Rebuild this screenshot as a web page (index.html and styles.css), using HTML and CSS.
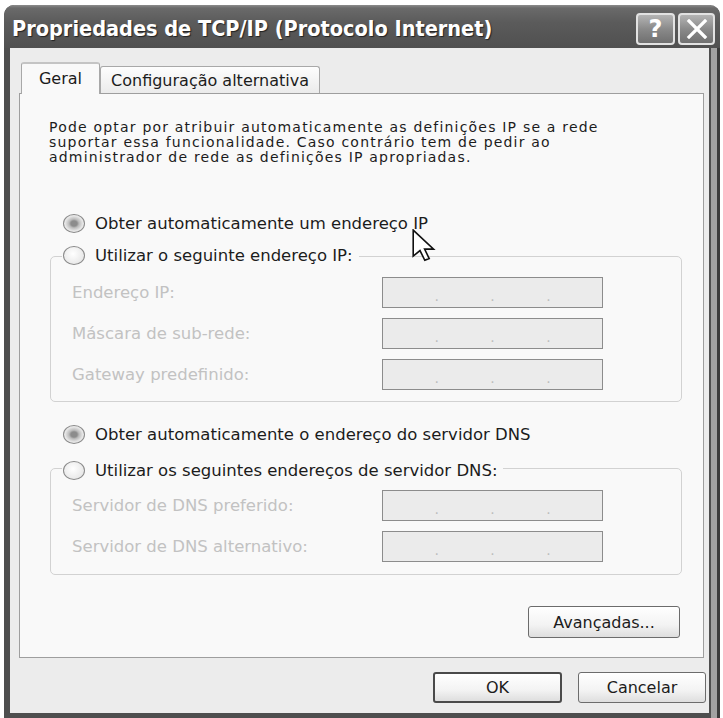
FILE: index.html
```html
<!DOCTYPE html>
<html lang="pt">
<head>
<meta charset="utf-8">
<title>Propriedades de TCP/IP</title>
<link rel="stylesheet" href="styles.css">
</head>
<body>
<div class="window">
  <div class="titlebar">
    <span class="title">Propriedades de TCP/IP (Protocolo Internet)</span>
    <div class="tbtns">
      <span class="tbtn help">?</span>
      <span class="tbtn close"><svg width="22" height="20" viewBox="0 0 22 20"><path d="M3 2 L19 18 M19 2 L3 18" stroke="#fff" stroke-width="3.2" stroke-linecap="square"/></svg></span>
    </div>
  </div>
  <div class="body">
    <div class="tabs">
      <div class="tab active">Geral</div>
      <div class="tab alt">Configuração alternativa</div>
    </div>
    <div class="panel">
      <p class="intro">Pode optar por atribuir automaticamente as definições IP se a rede<br>suportar essa funcionalidade. Caso contrário tem de pedir ao<br>administrador de rede as definições IP apropriadas.</p>

      <div class="radio-row r1"><span class="radio on"></span><span>Obter automaticamente um endereço IP</span></div>
      <div class="group g1">
        <div class="radio-row legend l1"><span class="radio"></span><span>Utilizar o seguinte endereço IP:</span></div>
        <div class="fields f1">
          <div class="field"><span>Endereço IP:</span><div class="ip"><i></i><b>.</b><i></i><b>.</b><i></i><b>.</b><i></i></div></div>
          <div class="field"><span>Máscara de sub-rede:</span><div class="ip"><i></i><b>.</b><i></i><b>.</b><i></i><b>.</b><i></i></div></div>
          <div class="field"><span>Gateway predefinido:</span><div class="ip"><i></i><b>.</b><i></i><b>.</b><i></i><b>.</b><i></i></div></div>
        </div>
      </div>

      <div class="radio-row r3"><span class="radio on"></span><span>Obter automaticamente o endereço do servidor DNS</span></div>
      <div class="group g2">
        <div class="radio-row legend l2"><span class="radio"></span><span>Utilizar os seguintes endereços de servidor DNS:</span></div>
        <div class="fields f2">
          <div class="field"><span>Servidor de DNS preferido:</span><div class="ip"><i></i><b>.</b><i></i><b>.</b><i></i><b>.</b><i></i></div></div>
          <div class="field"><span>Servidor de DNS alternativo:</span><div class="ip"><i></i><b>.</b><i></i><b>.</b><i></i><b>.</b><i></i></div></div>
        </div>
      </div>

      <div class="adv-row"><span class="btn adv">Avançadas...</span></div>
    </div>
    <div class="actions">
      <span class="btn ok">OK</span>
      <span class="btn cancel">Cancelar</span>
    </div>
  </div>
</div>
<svg class="cursor" width="24" height="33" viewBox="0 0 12 19" preserveAspectRatio="none"><path d="M0.6 0.6 L0.6 15.6 L4 12.4 L6.4 18 L8.6 17 L6.3 11.6 L10.8 11.6 Z" fill="#fff" stroke="#111" stroke-width="1.6" vector-effect="non-scaling-stroke" stroke-linejoin="miter"/></svg>
</body>
</html>
```
FILE: styles.css
```css
* { box-sizing: border-box; }
html, body { margin: 0; padding: 0; }
body {
  width: 723px;
  height: 718px;
  overflow: hidden;
  background: #fff;
  font-family: "DejaVu Sans", sans-serif;
  color: #1c1c1c;
  position: relative;
}
.window {
  margin: 5px 0 0 4px;
  width: 716px;
  height: 713px;
  border-radius: 10px 10px 0 0;
  overflow: hidden;
  background: linear-gradient(to left, #3c3c3c 0 3px, #a2a2a2 3px 9px, #4e4e4e 9px);
  display: flex;
  flex-direction: column;
}
.titlebar {
  height: 43px;
  flex: none;
  display: flex;
  align-items: center;
  padding: 4px 5px 0 8px;
  background: linear-gradient(#8c8c8c 0, #6a6a6a 3px, #5b5b5b 40%, #505050 100%);
}
.title {
  flex: 1;
  color: #fff;
  font-family: "DejaVu Sans Condensed", "DejaVu Sans", sans-serif;
  font-stretch: condensed;
  font-weight: bold;
  font-size: 21.5px;
  white-space: nowrap;
  text-shadow: 1px 1px 1px #222;
}
.tbtns { display: flex; gap: 3px; }
.tbtn {
  width: 39px;
  height: 32px;
  border: 2px solid #e2e2e2;
  border-radius: 4px;
  background: linear-gradient(#b4b4b4, #8a8a8a 50%, #707070);
  display: flex;
  align-items: center;
  justify-content: center;
  color: #fff;
  font-weight: bold;
  font-size: 24px;
  line-height: 1;
}
.tbtn.close { width: 37px; }

.body {
  flex: 1;
  margin: 0 11px 5px 6px;
  background: #ececec;
  padding: 14px 5px 0 9px;
  display: flex;
  flex-direction: column;
}
.tabs {
  display: flex;
  align-items: flex-end;
  height: 32px;
  padding-left: 2px;
}
.tab {
  height: 27px;
  margin-bottom: 1px;
  display: flex;
  align-items: center;
  justify-content: center;
  font-size: 16px;
  border: 1px solid #a8a8a8;
  border-bottom: none;
  border-radius: 3px 3px 0 0;
  background: linear-gradient(#fdfdfd, #ebebeb);
}
.tab.active {
  width: 79px;
  height: 32px;
  margin-bottom: 0;
  padding-bottom: 2px;
  background: #f9f9f9;
  border-top: 2px solid #c4c4c4;
  position: relative;
  z-index: 1;
}
.tab.alt { width: 220px; }

.panel {
  margin-top: -1px;
  height: 565px;
  border: 1px solid #9e9e9e;
  background: #f9f9f9;
  padding: 26px 23px 19px 29px;
}
.intro {
  margin: 0;
  font-size: 14px;
  letter-spacing: 1.2px;
  line-height: 15px;
  white-space: nowrap;
}
.radio-row {
  display: flex;
  align-items: center;
  gap: 10px;
  height: 20px;
  font-size: 16.5px;
  margin-left: 14px;
  white-space: nowrap;
}
.radio {
  flex: none;
  width: 22px;
  height: 19px;
  border-radius: 50%;
  border: 1.5px solid #8a8a8a;
  background: radial-gradient(circle at 45% 40%, #fff, #e0e0e0);
}
.radio.on {
  background: radial-gradient(ellipse at center, #8c8c8c 0 22%, #bcbcbc 36%, #e6e6e6 62%, #f4f4f4 100%);
}
.r1 { margin-top: 48px; }
.r3 { margin-top: 22px; }

.group {
  margin-left: 1px;
  width: 632px;
  border: 1px solid #d2d2d2;
  border-radius: 5px;
}
.g1 { margin-top: 23px; padding-bottom: 11px; }
.g2 { margin-top: 24px; padding-bottom: 12px; }
.legend {
  width: fit-content;
  margin-left: 11px;
  padding: 0 6px 0 1px;
  background: #f9f9f9;
}
.l1 { margin-top: -12px; }
.l2 { margin-top: -9px; }

.fields {
  display: flex;
  flex-direction: column;
  gap: 10px;
  padding-left: 21px;
}
.f1 { margin-top: 12px; }
.f2 { margin-top: 10px; }
.field {
  display: grid;
  grid-template-columns: 310px 221px;
  align-items: center;
  height: 31px;
  color: #c2c2c2;
  font-size: 16.5px;
  white-space: nowrap;
}
.ip {
  height: 31px;
  border: 1px solid #8c8c8c;
  background: #ebebeb;
  display: flex;
  align-items: flex-end;
  padding-bottom: 4px;
}
.ip i { flex: 1; }
.ip b {
  font-weight: normal;
  font-size: 14px;
  line-height: 14px;
  color: #bdbdbd;
}

.adv-row {
  margin-top: 31px;
  display: flex;
  justify-content: flex-end;
}
.btn {
  display: flex;
  align-items: center;
  justify-content: center;
  height: 32px;
  border: 1px solid #6c6c6c;
  border-radius: 3px;
  background: linear-gradient(#ffffff, #f3f3f3 60%, #dedede);
  font-size: 16px;
  color: #1c1c1c;
}
.adv { width: 152px; }
.actions {
  display: flex;
  justify-content: flex-end;
  gap: 16px;
  margin-top: 14px;
  margin-right: -2px;
}
.ok { width: 129px; height: 31px; border: 2px solid #4a4a4a; }
.cancel { width: 128px; height: 31px; }

.cursor {
  position: absolute;
  left: 412px;
  top: 229px;
}
```
